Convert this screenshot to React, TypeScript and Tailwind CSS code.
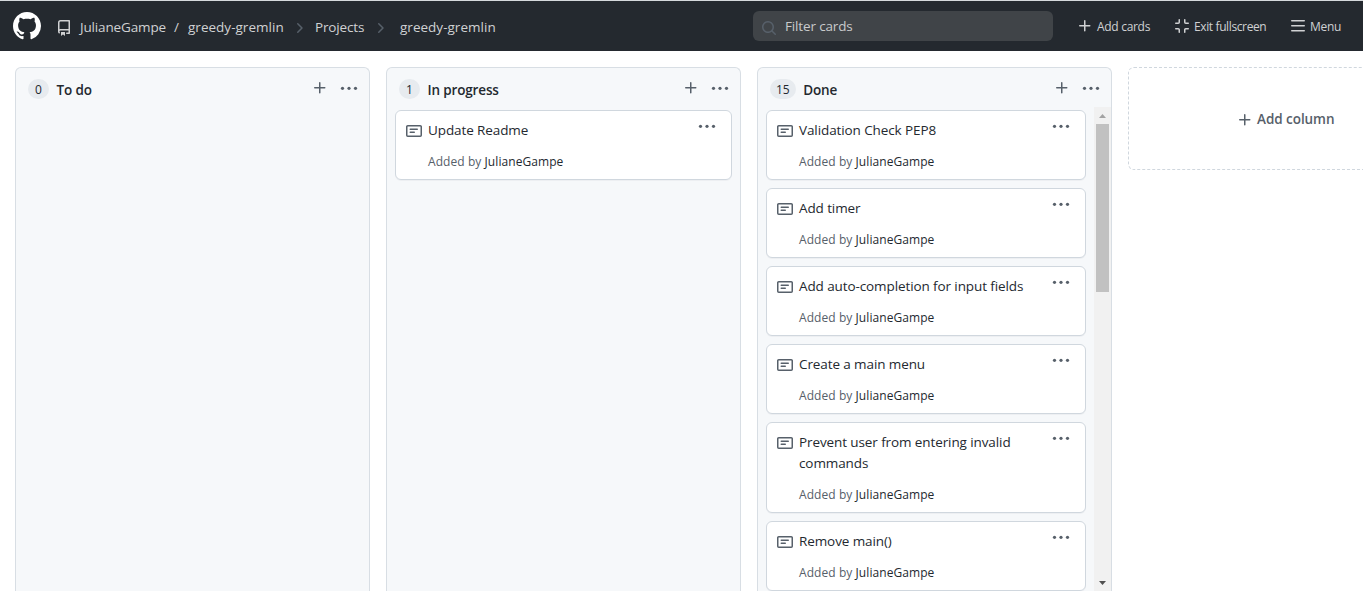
import type { ReactNode } from "react";

type IconProps = { d: string; size?: number; className?: string };

function Icon({ d, size = 16, className = "" }: IconProps) {
  return (
    <svg
      viewBox="0 0 16 16"
      width={size}
      height={size}
      fill="currentColor"
      fillRule="evenodd"
      className={`shrink-0 ${className}`}
      aria-hidden="true"
    >
      <path d={d} />
    </svg>
  );
}

const ICONS = {
  mark: "M8 0C3.58 0 0 3.58 0 8c0 3.54 2.29 6.53 5.47 7.59.4.07.55-.17.55-.38 0-.19-.01-.82-.01-1.49-2.01.37-2.53-.49-2.69-.94-.09-.23-.48-.94-.82-1.13-.28-.15-.68-.52-.01-.53.63-.01 1.08.58 1.23.82.72 1.21 1.87.87 2.33.66.07-.52.28-.87.51-1.07-1.78-.2-3.64-.89-3.64-3.95 0-.87.31-1.59.82-2.15-.08-.2-.36-1.02.08-2.12 0 0 .67-.21 2.2.82.64-.18 1.32-.27 2-.27.68 0 1.36.09 2 .27 1.53-1.04 2.2-.82 2.2-.82.44 1.1.16 1.92.08 2.12.51.56.82 1.27.82 2.15 0 3.07-1.87 3.75-3.65 3.95.29.25.54.73.54 1.48 0 1.07-.01 1.93-.01 2.2 0 .21.15.46.55.38A8.013 8.013 0 0016 8c0-4.42-3.58-8-8-8z",
  repo: "M2 2.5A2.5 2.5 0 014.5 0h8.75a.75.75 0 01.75.75v12.5a.75.75 0 01-.75.75h-2.5a.75.75 0 110-1.5h1.75v-2h-8a1 1 0 00-.714 1.7.75.75 0 01-1.072 1.05A2.495 2.495 0 012 11.5v-9zm10.5-1V9h-8c-.356 0-.694.074-1 .208V2.5a1 1 0 011-1h8zM5 12.25v3.25a.25.25 0 00.4.2l1.45-1.087a.25.25 0 01.3 0L8.6 15.7a.25.25 0 00.4-.2v-3.25a.25.25 0 00-.25-.25h-3.5a.25.25 0 00-.25.25z",
  note: "M0 3.75C0 2.784.784 2 1.75 2h12.5c.966 0 1.75.784 1.75 1.75v8.5A1.75 1.75 0 0114.25 14H1.75A1.75 1.75 0 010 12.25v-8.5zm1.75-.25a.25.25 0 00-.25.25v8.5c0 .138.112.25.25.25h12.5a.25.25 0 00.25-.25v-8.5a.25.25 0 00-.25-.25H1.75zM3.5 6.25a.75.75 0 01.75-.75h7a.75.75 0 010 1.5h-7a.75.75 0 01-.75-.75zm.75 2.25a.75.75 0 000 1.5h4a.75.75 0 000-1.5h-4z",
  plus: "M7.75 2a.75.75 0 01.75.75V7h4.25a.75.75 0 110 1.5H8.5v4.25a.75.75 0 11-1.5 0V8.5H2.75a.75.75 0 010-1.5H7V2.75A.75.75 0 017.75 2z",
  search:
    "M11.5 7a4.499 4.499 0 11-8.998 0A4.499 4.499 0 0111.5 7zm-.82 4.74a6 6 0 111.06-1.06l3.04 3.04a.75.75 0 11-1.06 1.06l-3.04-3.04z",
  chevron:
    "M6.22 3.22a.75.75 0 011.06 0l4.25 4.25a.75.75 0 010 1.06l-4.25 4.25a.75.75 0 01-1.06-1.06L9.94 8 6.22 4.28a.75.75 0 010-1.06z",
  bars: "M1 2.75A.75.75 0 011.75 2h12.5a.75.75 0 110 1.5H1.75A.75.75 0 011 2.75zm0 5A.75.75 0 011.75 7h12.5a.75.75 0 110 1.5H1.75A.75.75 0 011 7.75zM1.75 12a.75.75 0 100 1.5h12.5a.75.75 0 100-1.5H1.75z",
  normal:
    "M5.25 1a.75.75 0 01.75.75v2.5A1.75 1.75 0 014.25 6h-2.5a.75.75 0 010-1.5h2.5a.25.25 0 00.25-.25v-2.5A.75.75 0 015.25 1zm5.5 0a.75.75 0 01.75.75v2.5c0 .138.112.25.25.25h2.5a.75.75 0 010 1.5h-2.5A1.75 1.75 0 0110 4.25v-2.5a.75.75 0 01.75-.75zM1 10.75a.75.75 0 01.75-.75h2.5c.966 0 1.75.784 1.75 1.75v2.5a.75.75 0 01-1.5 0v-2.5a.25.25 0 00-.25-.25h-2.5a.75.75 0 01-.75-.75zm9 1c0-.966.784-1.75 1.75-1.75h2.5a.75.75 0 010 1.5h-2.5a.25.25 0 00-.25.25v2.5a.75.75 0 01-1.5 0v-2.5z",
};

function Dots() {
  return (
    <svg viewBox="0 0 18 4" width="18" height="4" fill="currentColor" className="shrink-0" aria-hidden="true">
      <circle cx="2.5" cy="2.3" r="1.6" />
      <circle cx="9" cy="2.3" r="1.6" />
      <circle cx="15.5" cy="2.3" r="1.6" />
    </svg>
  );
}

function Header() {
  return (
    <header className="flex h-[51px] items-center border-t border-[#d5d9dc] bg-[#24292f] text-[13.5px] text-[#d0d1d3]">
      <nav className="flex h-full w-[753px] items-center whitespace-nowrap pl-[13px] pt-[3px]">
        <Icon d={ICONS.mark} size={28} className="mb-[3px] text-white" />
        <Icon d={ICONS.repo} className="ml-[15px]" />
        <a className="mb-px ml-2 w-[87px] tracking-[-0.15px]">JulianeGampe</a>
        <span className="mb-px ml-[7px] w-[7px]">/</span>
        <a className="mb-px ml-[7px] w-[96px] tracking-[0.02px]">greedy-gremlin</a>
        <Icon d={ICONS.chevron} className="ml-[7px] text-[#57606a]" />
        <a className="mb-px ml-2 w-[50px] tracking-[-0.15px]">Projects</a>
        <Icon d={ICONS.chevron} className="ml-[7px] text-[#57606a]" />
        <span className="mb-px ml-3 tracking-[0.02px]">greedy-gremlin</span>
      </nav>
      <div className="flex h-[30px] w-[300px] items-center rounded-md bg-[#404448] pl-2 text-[#c9cacc]">
        <Icon d={ICONS.search} className="mt-[3px] text-[#57606a]" />
        <span className="ml-2 tracking-[-0.15px]">Filter cards</span>
      </div>
      <div className="flex items-center whitespace-nowrap pt-px text-xs tracking-[-0.3px]">
        <span className="ml-6 flex w-[97px] items-center gap-1">
          <Icon d={ICONS.plus} className="mb-[2px]" />
          Add cards
        </span>
        <span className="flex w-[115px] items-center gap-1 tracking-[-0.38px]">
          <Icon d={ICONS.normal} className="mb-[2px]" />
          Exit fullscreen
        </span>
        <span className="ml-px flex items-center gap-1">
          <Icon d={ICONS.bars} className="mb-[2px]" />
          Menu
        </span>
      </div>
    </header>
  );
}

function Card({ title }: { title: string }) {
  return (
    <article className="flex shrink-0 rounded-md border border-[#d0d7de] bg-white pb-[7px] pl-[10px] pr-[15px] pt-[9px] shadow-[0_1px_0_rgba(31,35,40,0.04)]">
      <Icon d={ICONS.note} className="mt-[3px] text-[#57606a]" />
      <div className="ml-[6px] min-w-0 flex-1">
        <h4 className="w-[240px] text-[13.5px] leading-[21px] tracking-[-0.1px] text-[#24292f]">{title}</h4>
        <p className="mt-[10px] text-xs leading-[21px] tracking-[0.07px] text-[#57606a]">
          Added by <a className="text-[#24292f]">JulianeGampe</a>
        </p>
      </div>
      <div className="mt-1 text-[#57606a]">
        <Dots />
      </div>
    </article>
  );
}

function Column({ count, name, children }: { count: number; name: string; children?: ReactNode }) {
  return (
    <section className="flex w-[355px] shrink-0 flex-col overflow-hidden rounded-t-md border border-b-0 border-[#d8dee4] bg-[#f6f8fa]">
      <div className="flex h-[39px] shrink-0 items-center pl-3 pr-[11px] pt-[3px]">
        <span className="flex h-5 min-w-[21px] items-center justify-center rounded-full bg-[#e7ebef] px-[6px] pt-px text-xs font-medium text-[#24292f]">
          {count}
        </span>
        <h3 className="ml-[7.5px] flex-1 pt-[2px] text-[13.5px] font-semibold tracking-[-0.15px] text-[#24292f]">{name}</h3>
        <div className="mb-[2px] flex items-center gap-3 text-[#57606a]">
          <Icon d={ICONS.plus} />
          <Dots />
        </div>
      </div>
      {children}
    </section>
  );
}

const DONE = [
  "Validation Check PEP8",
  "Add timer",
  "Add auto-completion for input fields",
  "Create a main menu",
  "Prevent user from entering invalid commands",
  "Remove main()",
];

function Scrollbar() {
  return (
    <div className="flex w-[17px] shrink-0 flex-col items-center bg-[#f1f1f1]">
      <svg width="17" height="17" viewBox="0 0 17 17" className="shrink-0" fill="#a3a3a3">
        <path d="M5 11h7L8.5 7z" />
      </svg>
      <div className="h-[168px] w-[13px] shrink-0 bg-[#c1c1c1]" />
      <svg width="17" height="17" viewBox="0 0 17 17" className="mt-auto shrink-0" fill="#505050">
        <path d="M5 7h7l-3.5 4z" />
      </svg>
    </div>
  );
}

export default function App() {
  return (
    <div className="flex h-[591px] w-[1363px] flex-col overflow-hidden bg-white font-['Open_Sans','Noto_Sans',sans-serif]">
      <Header />
      <main className="flex min-h-0 flex-1 gap-4 pl-[15px] pt-4">
        <Column count={0} name="To do" />
        <Column count={1} name="In progress">
          <div className="flex flex-col px-2 pt-[3px]">
            <Card title="Update Readme" />
          </div>
        </Column>
        <Column count={15} name="Done">
          <div className="flex min-h-0 flex-1">
            <div className="flex flex-1 flex-col gap-2 overflow-hidden px-2 pt-[3px]">
              {DONE.map((title) => (
                <Card key={title} title={title} />
              ))}
            </div>
            <Scrollbar />
          </div>
        </Column>
        <button className="flex h-[103px] w-[355px] shrink-0 items-center justify-start rounded-md border border-dashed border-[#d0d7de] pl-[108px] pt-[2px] text-[13.5px] font-semibold text-[#57606a]">
          <Icon d={ICONS.plus} />
          <span className="ml-1 tracking-[-0.05px]">Add column</span>
        </button>
      </main>
    </div>
  );
}
